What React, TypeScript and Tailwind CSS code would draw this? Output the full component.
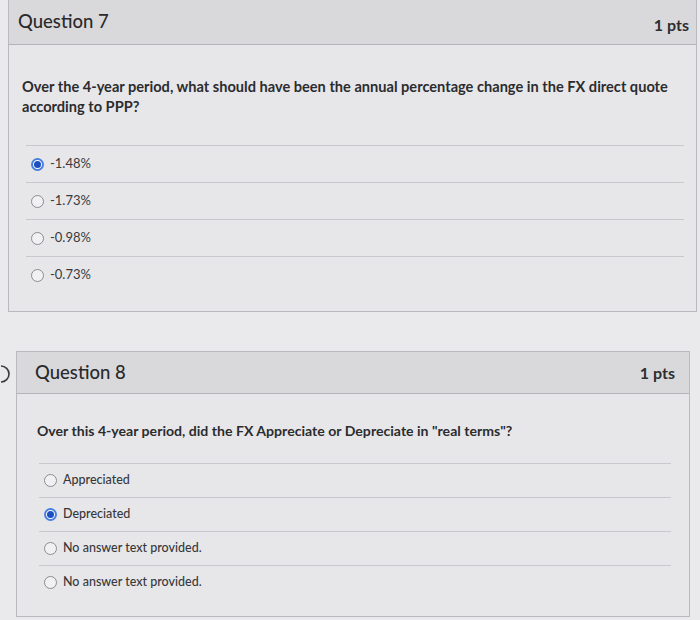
import React from 'react';

interface Option {
  label: string;
  selected?: boolean;
}

interface QuestionProps {
  title: string;
  text: React.ReactNode;
  options: Option[];
  variant: 'q7' | 'q8';
}

const Radio: React.FC<{ selected?: boolean }> = ({ selected }) =>
  selected ? (
    <span className="flex h-[13px] w-[13px] shrink-0 items-center justify-center rounded-full border-2 border-[#4a7fe0] bg-white">
      <span className="h-[7px] w-[7px] rounded-full bg-[#1c4fc2]" />
    </span>
  ) : (
    <span className="h-[13px] w-[13px] shrink-0 rounded-full border border-[#8c8c90] bg-[#f1f1f3]" />
  );

const Question: React.FC<QuestionProps> = ({ title, text, options, variant }) => {
  const q7 = variant === 'q7';
  return (
    <div className={`border border-[#b9b9be] bg-[#e7e7ea] ${q7 ? 'ml-[8px] mr-[3px] -mt-px' : 'flex-1 mr-[10px]'}`}>
      <div
        className={`flex items-center justify-between border-b border-[#b3b3b8] bg-[#d9d9dc] ${
          q7 ? 'h-[45px] pl-[9px] pr-[7px]' : 'h-[42px] pl-[18px] pr-[14px]'
        }`}
      >
        <span className="text-[18.5px] font-medium text-[#2a2a2c]">{title}</span>
        <span className={`text-[16px] font-bold text-[#2e2e30] ${q7 ? 'mt-[6px]' : 'mt-[1px]'}`}>1 pts</span>
      </div>
      <div className={q7 ? 'pt-[32px] pb-[18px]' : 'pt-[27px] pb-[17px]'}>
        <p
          className={`font-bold text-[#2c2c2e] ${
            q7 ? 'px-[13px] text-[14.6px] leading-[20px]' : 'px-[20px] text-[14.1px] leading-[20px]'
          }`}
        >
          {text}
        </p>
        <div className={q7 ? 'mt-[28px] ml-[17px] mr-[12px]' : 'mt-[22px] ml-[22px] mr-[18px]'}>
          {options.map((o, i) => (
            <div
              key={i}
              className={`flex items-center gap-[6px] border-t border-[#c9c9cd] ${
                q7 ? 'h-[37px] pl-[5px] text-[13px] text-[#3a3a3c]' : 'h-[34px] pl-[5px] text-[12.5px] font-medium text-[#38383a]'
              }`}
            >
              <Radio selected={o.selected} />
              <span>{o.label}</span>
            </div>
          ))}
        </div>
      </div>
    </div>
  );
};

export default function App() {
  return (
    <div className="h-[620px] w-[700px] overflow-hidden bg-[#eaeaec] font-['Lato','Liberation_Sans',sans-serif]">
      <Question
        variant="q7"
        title="Question 7"
        text="Over the 4-year period, what should have been the annual percentage change in the FX direct quote according to PPP?"
        options={[{ label: '-1.48%', selected: true }, { label: '-1.73%' }, { label: '-0.98%' }, { label: '-0.73%' }]}
      />
      <div className="mt-[39px] flex">
        <div className="w-[16px] shrink-0 pt-[13px]">
          <svg width="16" height="20" viewBox="0 0 16 20">
            <path d="M1 2 A8 8 0 0 1 1 18" fill="none" stroke="#3a3a3c" strokeWidth="1.6" />
          </svg>
        </div>
        <Question
          variant="q8"
          title="Question 8"
          text={'Over this 4-year period, did the FX Appreciate or Depreciate in "real terms"?'}
          options={[
            { label: 'Appreciated' },
            { label: 'Depreciated', selected: true },
            { label: 'No answer text provided.' },
            { label: 'No answer text provided.' },
          ]}
        />
      </div>
    </div>
  );
}
